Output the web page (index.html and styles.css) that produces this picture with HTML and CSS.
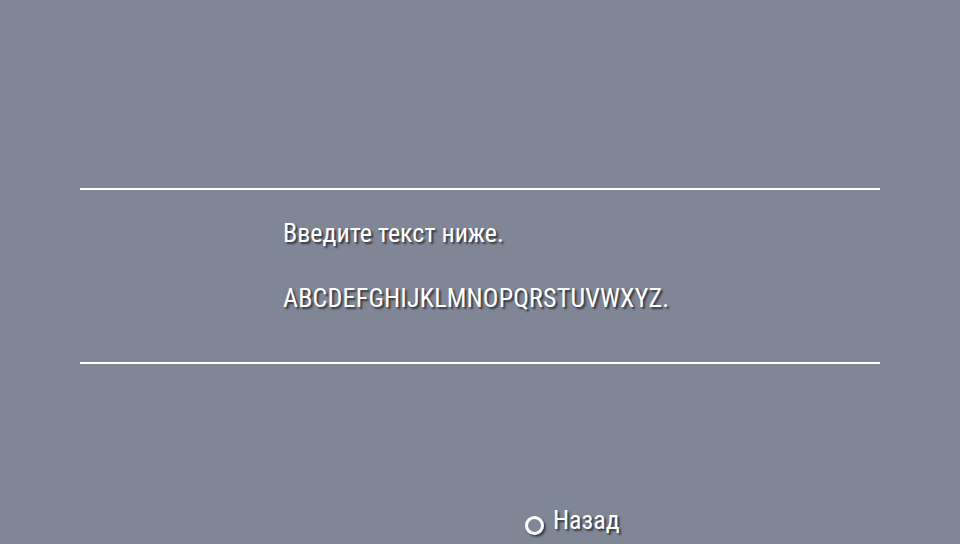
FILE: index.html
```html
<!DOCTYPE html>
<html lang="ru">
<head>
<meta charset="utf-8">
<link rel="stylesheet" href="styles.css">
</head>
<body>
<div class="screen">
  <section class="panel">
    <p class="prompt">Введите текст ниже.</p>
    <p class="sample">ABCDEFGHIJKLMNOPQRSTUVWXYZ.</p>
  </section>
  <footer class="footer">
    <span class="circle"></span>
    <span class="back">Назад</span>
  </footer>
</div>
</body>
</html>
```

FILE: styles.css
```css
html, body {
  margin: 0;
  padding: 0;
  width: 960px;
  height: 544px;
  overflow: hidden;
  background: #808696;
}
.screen {
  width: 960px;
  height: 544px;
  display: flex;
  flex-direction: column;
  font-family: Roboto, "Liberation Sans", sans-serif;
  font-stretch: condensed;
  color: #ffffff;
  text-shadow: 2px 2px 2px rgba(0, 0, 0, 0.6);
}
.panel {
  margin: 188px 80px 0;
  height: 172px;
  border-top: 2px solid #ffffff;
  border-bottom: 2px solid #ffffff;
  padding: 0 0 0 203px;
  box-sizing: content-box;
}
.panel p {
  margin: 0;
  font-size: 26px;
  line-height: 28px;
}
.prompt {
  padding-top: 29px;
}
.sample {
  padding-top: 37px;
  letter-spacing: 0.2px;
}
.footer {
  margin-top: 141px;
  display: flex;
  align-items: center;
  padding-left: 525px;
  gap: 9px;
}
.circle {
  width: 13px;
  height: 13px;
  border: 3px solid #ffffff;
  border-radius: 50%;
  box-shadow: 2px 2px 2px rgba(0, 0, 0, 0.5);
  margin-top: 11px;
}
.back {
  font-size: 26px;
  line-height: 28px;
}
```
